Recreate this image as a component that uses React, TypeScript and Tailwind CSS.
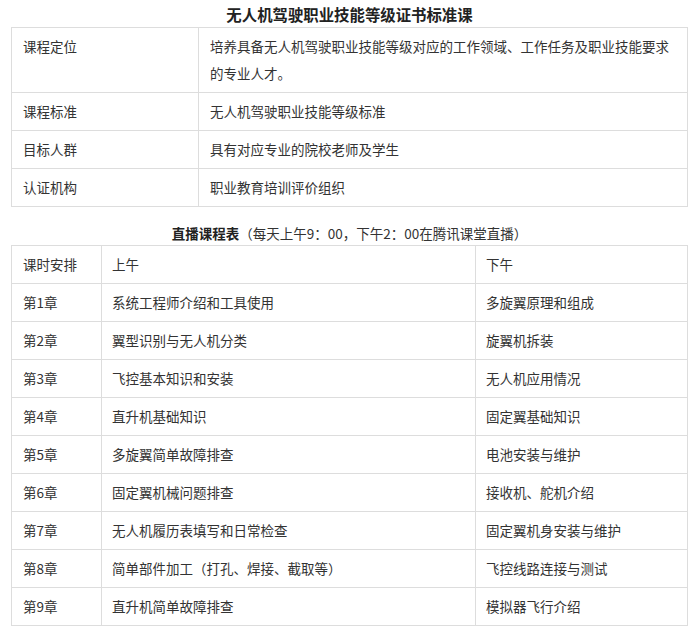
import React from "react";

const info: [string, React.ReactNode][] = [
  [
    "课程定位",
    <>
      培养具备无人机驾驶职业技能等级对应的工作领域、工作任务及职业技能要求
      <br />
      的专业人才。
    </>,
  ],
  ["课程标准", "无人机驾驶职业技能等级标准"],
  ["目标人群", "具有对应专业的院校老师及学生"],
  ["认证机构", "职业教育培训评价组织"],
];

const schedule = [
  ["第1章", "系统工程师介绍和工具使用", "多旋翼原理和组成"],
  ["第2章", "翼型识别与无人机分类", "旋翼机拆装"],
  ["第3章", "飞控基本知识和安装", "无人机应用情况"],
  ["第4章", "直升机基础知识", "固定翼基础知识"],
  ["第5章", "多旋翼简单故障排查", "电池安装与维护"],
  ["第6章", "固定翼机械问题排查", "接收机、舵机介绍"],
  ["第7章", "无人机履历表填写和日常检查", "固定翼机身安装与维护"],
  ["第8章", "简单部件加工（打孔、焊接、截取等）", "飞控线路连接与测试"],
  ["第9章", "直升机简单故障排查", "模拟器飞行介绍"],
];

const cell = "border border-[#dddddd] px-[10px] py-[5px] leading-[27px] align-top text-left font-normal";

export default function App() {
  return (
    <div
      className="w-[692px] h-[628px] bg-white text-[#333333] text-[13.5px]"
      style={{ fontFamily: '"Noto Sans CJK SC", "Noto Sans", sans-serif' }}
    >
      <div className="pl-[11px] w-[688px]">
        <h2 className="h-[27px] pt-[2px] leading-[25px] text-center text-[15.4px] font-bold text-[#222222]">
          无人机驾驶职业技能等级证书标准课
        </h2>
        <table className="w-[677px] border-collapse table-fixed">
          <colgroup>
            <col className="w-[187px]" />
            <col />
          </colgroup>
          <tbody>
            {info.map(([k, v]) => (
              <tr key={k}>
                <td className={cell + " pl-[11px]"}>{k}</td>
                <td className={cell + " pl-[11px] whitespace-nowrap"}>{v}</td>
              </tr>
            ))}
          </tbody>
        </table>
        <p className="h-[38px] pt-[14px] leading-[24px] text-center">
          <span className="font-bold text-[#222222]">直播课程表</span>
          <span>（每天上午9：00，下午2：00在腾讯课堂直播）</span>
        </p>
        <table className="w-[677px] border-collapse table-fixed">
          <colgroup>
            <col className="w-[90px]" />
            <col className="w-[374px]" />
            <col />
          </colgroup>
          <tbody>
            <tr>
              <td className={cell + " pl-[11px]"}>课时安排</td>
              <td className={cell}>上午</td>
              <td className={cell}>下午</td>
            </tr>
            {schedule.map(([c, am, pm]) => (
              <tr key={c}>
                <td className={cell + " pl-[11px]"}>{c}</td>
                <td className={cell}>{am}</td>
                <td className={cell}>{pm}</td>
              </tr>
            ))}
          </tbody>
        </table>
      </div>
    </div>
  );
}
